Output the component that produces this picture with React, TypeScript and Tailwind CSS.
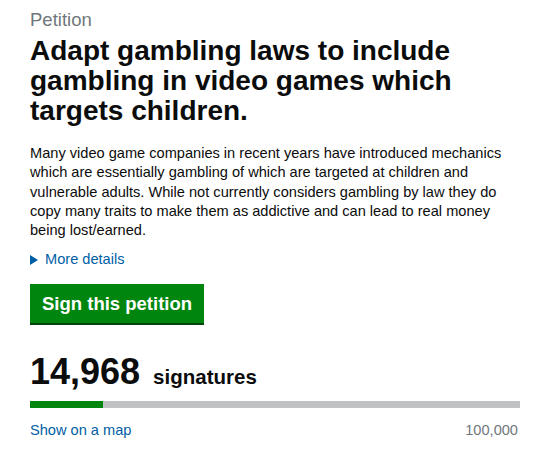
export default function App() {
  const count = 14968;
  const target = 100000;
  const pct = (count / target) * 100;

  return (
    <div className="min-h-screen bg-white font-['Liberation_Sans',Arial,sans-serif] text-[#0b0c0c]">
      <div className="w-[490px] ml-[30px] pt-[8px]">
        {/* heading */}
        <div className="text-[18.5px] leading-[23px] text-[#6f777b]">Petition</div>
        <h1 className="mt-[5px] text-[28px] leading-[30px] font-bold">
          Adapt gambling laws to include gambling in video games which targets children.
        </h1>

        {/* body */}
        <p className="mt-[18px] text-[14.6px] leading-[19.3px]">
          Many video game companies in recent years have introduced mechanics which are essentially
          gambling of which are targeted at children and vulnerable adults. While not currently
          considers gambling by law they do copy many traits to make them as addictive and can lead to
          real money being lost/earned.
        </p>

        <div className="mt-[10px] flex items-center gap-[7px] text-[14.6px] leading-[19px] text-[#005ea5]">
          <svg width="8" height="10" viewBox="0 0 8 10" className="shrink-0">
            <path d="M0 0 L8 5 L0 10 Z" fill="#005ea5" />
          </svg>
          <span>More details</span>
        </div>

        {/* sign button */}
        <button className="mt-[15px] h-[39px] px-[12px] bg-[#00860f] text-white text-[18.5px] font-bold leading-[37px] shadow-[0_2px_0_#00440a] text-left">
          Sign this petition
        </button>

        {/* signature count */}
        <div className="mt-[29px] flex items-baseline gap-[13px]">
          <span className="text-[36px] leading-[40px] font-bold">14,968</span>
          <span className="text-[20.5px] font-bold">signatures</span>
        </div>

        <div className="mt-[8px] h-[7px] bg-[#bfc1c3]">
          <div className="h-full bg-[#00860f]" style={{ width: `${pct}%` }} />
        </div>

        <div className="mt-[13px] flex justify-between text-[14.6px] leading-[19px]">
          <a className="text-[#005ea5]" href="#">Show on a map</a>
          <span className="text-[#6f777b] pr-[2px]">100,000</span>
        </div>
      </div>
    </div>
  );
}
